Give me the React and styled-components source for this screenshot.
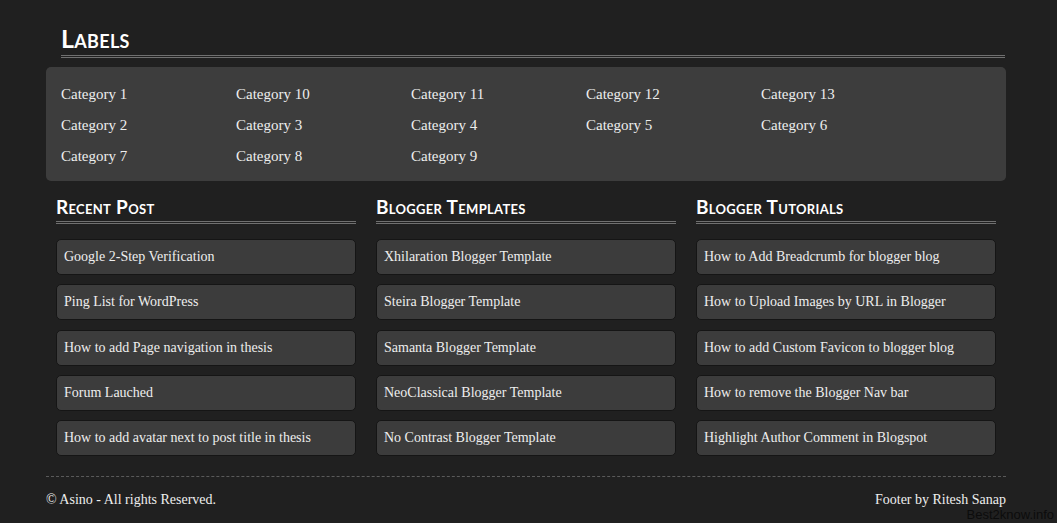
import React from 'react'
import styled, { createGlobalStyle } from 'styled-components'

const GlobalStyle = createGlobalStyle`
  html, body {
    margin: 0;
    padding: 0;
    background: #202020;
  }
  body {
    font-family: "Liberation Serif", "Times New Roman", serif;
    color: #eeeeee;
  }
`

const Page = styled.div`
  position: relative;
  width: 1057px;
  height: 523px;
  overflow: hidden;
`

const Container = styled.div`
  width: 960px;
  margin-left: 46px;
  padding-top: 23px;
`

const Heading = styled.h2`
  margin: 0 ${({ $inset }) => $inset}px 0 ${({ $indent }) => $indent}px;
  padding-bottom: 2px;
  font-family: Lato, "DejaVu Sans", sans-serif;
  font-weight: bold;
  font-variant: small-caps;
  letter-spacing: 0.3px;
  font-size: ${({ $big }) => ($big ? 25 : 19)}px;
  line-height: ${({ $big }) => ($big ? 30 : 24)}px;
  color: #ffffff;
  border-bottom: 3px double #707070;
`

const LabelBox = styled.div`
  margin-top: 9px;
  background: #3d3d3d;
  border-radius: 5px;
  padding: 12px 0 9px;
  display: grid;
  grid-template-columns: repeat(5, 175px);
`

const LabelLink = styled.a`
  padding-left: 15px;
  font-size: 15px;
  line-height: 31px;
  color: #eeeeee;
  text-decoration: none;
`

const Columns = styled.div`
  display: grid;
  grid-template-columns: repeat(3, 300px);
  gap: 20px;
  padding: 14px 10px 0;
`

const Column = styled.div`
  display: flex;
  flex-direction: column;
`

const PostList = styled.ul`
  list-style: none;
  margin: 15px 0 0;
  padding: 0;
  display: flex;
  flex-direction: column;
  gap: 9.25px;
`

const PostItem = styled.li`
  height: 34px;
  line-height: 34px;
  padding: 0 7px;
  background: #3c3c3c;
  border: 1px solid #151515;
  border-radius: 5px;
  font-size: 14px;
  white-space: nowrap;
  overflow: hidden;
`

const Footer = styled.footer`
  margin-top: 20px;
  border-top: 1px dashed #5a5a5a;
  display: flex;
  justify-content: space-between;
  padding-top: 14px;
  font-size: 14px;
  line-height: 17px;
`

const Watermark = styled.span`
  position: absolute;
  right: 3px;
  bottom: 1px;
  font-family: "Liberation Sans", Arial, sans-serif;
  font-size: 13px;
  color: #0c0c0c;
`

const labels = [
  'Category 1', 'Category 10', 'Category 11', 'Category 12', 'Category 13',
  'Category 2', 'Category 3', 'Category 4', 'Category 5', 'Category 6',
  'Category 7', 'Category 8', 'Category 9',
]

const sections = [
  {
    title: 'Recent Post',
    posts: [
      'Google 2-Step Verification',
      'Ping List for WordPress',
      'How to add Page navigation in thesis',
      'Forum Lauched',
      'How to add avatar next to post title in thesis',
    ],
  },
  {
    title: 'Blogger Templates',
    posts: [
      'Xhilaration Blogger Template',
      'Steira Blogger Template',
      'Samanta Blogger Template',
      'NeoClassical Blogger Template',
      'No Contrast Blogger Template',
    ],
  },
  {
    title: 'Blogger Tutorials',
    posts: [
      'How to Add Breadcrumb for blogger blog',
      'How to Upload Images by URL in Blogger',
      'How to add Custom Favicon to blogger blog',
      'How to remove the Blogger Nav bar',
      'Highlight Author Comment in Blogspot',
    ],
  },
]

export default function App() {
  return (
    <Page>
      <GlobalStyle />
      <Container>
        <Heading $big $indent={15} $inset={1}>Labels</Heading>
        <LabelBox>
          {labels.map((l) => (
            <LabelLink key={l} href="#">{l}</LabelLink>
          ))}
        </LabelBox>

        <Columns>
          {sections.map((s) => (
            <Column key={s.title}>
              <Heading $indent={0} $inset={0}>{s.title}</Heading>
              <PostList>
                {s.posts.map((p) => (
                  <PostItem key={p}>{p}</PostItem>
                ))}
              </PostList>
            </Column>
          ))}
        </Columns>

        <Footer>
          <span>© Asino - All rights Reserved.</span>
          <span>Footer by Ritesh Sanap</span>
        </Footer>
      </Container>
      <Watermark>Best2know.info</Watermark>
    </Page>
  )
}
